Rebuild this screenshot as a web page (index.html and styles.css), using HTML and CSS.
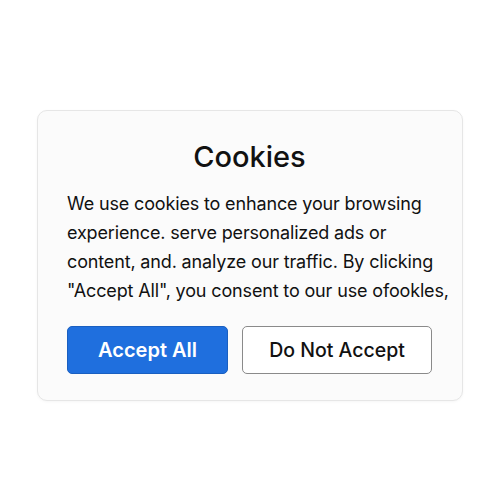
FILE: index.html
```html
<!DOCTYPE html>
<html lang="en">
<head>
  <meta charset="UTF-8" />
  <meta name="viewport" content="width=device-width, initial-scale=1.0" />
  <title>Cookies</title>
  <link rel="stylesheet" href="styles.css">
</head>
<body>

  <!-- Cookie banner -->
  <div class="cookie-card">
    <h1>Cookies</h1>
    <p>
      We use cookies to enhance your browsing<br>
      experience. serve personalized ads or<br>
      content, and. analyze our traffic. By clicking<br>
      "Accept All", you consent to our use ofookles,
    </p>
    <div class="cookie-actions">
      <button class="btn-accept">Accept All</button>
      <button class="btn-decline">Do Not Accept</button>
    </div>
  </div>

</body>
</html>
```

FILE: styles.css
```css
body {
  font-family: Inter, 'Liberation Sans', Arial, sans-serif;
  margin: 0;
  background-color: #ffffff;
  color: #111111;
  height: 500px;
  display: flex;
  align-items: center;
  justify-content: center;
}

.cookie-card {
  width: 426px;
  box-sizing: border-box;
  margin-top: 11px;
  padding: 28px 30px 26px 29px;
  background-color: #fbfbfb;
  border: 1px solid #e6e6e6;
  border-radius: 10px;
  box-shadow: 0 1px 3px rgba(0, 0, 0, 0.04);
}

.cookie-card h1 {
  margin: 0 0 15px;
  font-size: 29px;
  font-weight: 500;
  text-align: center;
  color: #111;
}

.cookie-card p {
  margin: 0;
  font-size: 18px;
  line-height: 29px;
  letter-spacing: -0.15px;
  white-space: nowrap;
  color: #111;
}

.cookie-actions {
  display: flex;
  gap: 14px;
  margin-top: 21px;
}

.cookie-actions button {
  height: 48px;
  font-family: inherit;
  border-radius: 5px;
  cursor: pointer;
}

.btn-accept {
  width: 162px;
  background-color: #1f6fde;
  border: 1px solid #1a5fc0;
  color: #ffffff;
  font-size: 20px;
  font-weight: 600;
}

.btn-decline {
  width: 191px;
  background-color: #ffffff;
  border: 1px solid #8a8a8a;
  color: #111;
  font-size: 19.5px;
  font-weight: 500;
}
```
